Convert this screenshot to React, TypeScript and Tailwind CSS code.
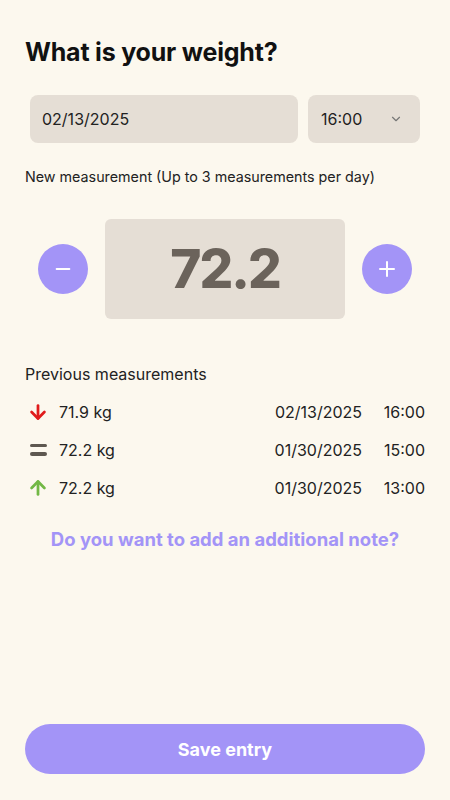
import { ChevronDown, Minus, Plus, ArrowDown, ArrowUp } from 'lucide-react'

const rows = [
  { trend: 'down', value: '71.9 kg', date: '02/13/2025', time: '16:00' },
  { trend: 'same', value: '72.2 kg', date: '01/30/2025', time: '15:00' },
  { trend: 'up', value: '72.2 kg', date: '01/30/2025', time: '13:00' },
]

const TrendIcon = ({ trend }: { trend: string }) => {
  if (trend === 'down') return <ArrowDown className="w-[22px] h-[22px] text-[#e01b1b]" strokeWidth={3} />
  if (trend === 'up') return <ArrowUp className="w-[22px] h-[22px] text-[#72b845]" strokeWidth={3} />
  return (
    <div className="w-[22px] h-[22px] flex flex-col justify-center items-center gap-[5px]">
      <span className="block w-[17px] h-[3.5px] bg-[#5e5850] rounded-sm" />
      <span className="block w-[17px] h-[3.5px] bg-[#5e5850] rounded-sm" />
    </div>
  )
}

export default function App() {
  return (
    <div
      className="w-[450px] h-[800px] bg-[#fcf8ee] flex flex-col px-[25px] pt-[36px] pb-[26px] text-[#1a1a1a]"
      style={{ fontFamily: 'Inter, "Noto Sans", sans-serif' }}
    >
      <h1 className="text-[25px] font-bold leading-[32px] tracking-[-0.2px] text-[#111]">What is your weight?</h1>

      <div className="flex gap-[10px] px-[5px] mt-[27px]">
        <div className="flex-1 h-[48px] rounded-[8px] bg-[#e5ded5] flex items-center px-[12px] text-[16px] text-[#222]">
          02/13/2025
        </div>
        <div className="w-[112px] h-[48px] rounded-[8px] bg-[#e5ded5] flex items-center justify-between pl-[13px] pr-[17px] text-[16px] text-[#222]">
          16:00
          <ChevronDown className="w-[14px] h-[14px] text-[#777]" strokeWidth={2} />
        </div>
      </div>

      <p className="text-[14.3px] mt-[23px] text-[#222]">New measurement (Up to 3 measurements per day)</p>

      <div className="flex items-center justify-center gap-[17px] mt-[32px]">
        <button className="w-[50px] h-[50px] rounded-full bg-[#a394f7] flex items-center justify-center">
          <Minus className="w-[22px] h-[22px] text-white" strokeWidth={2} />
        </button>
        <div className="w-[240px] h-[100px] rounded-[6px] bg-[#e5ded5] flex items-center justify-center">
          <span className="text-[53px] font-extrabold text-[#6b635b] tracking-[-2px]">72.2</span>
        </div>
        <button className="w-[50px] h-[50px] rounded-full bg-[#a394f7] flex items-center justify-center">
          <Plus className="w-[24px] h-[24px] text-white" strokeWidth={2} />
        </button>
      </div>

      <p className="text-[16px] mt-[43px] text-[#222]">Previous measurements</p>

      <div className="flex flex-col mt-[7px]">
        {rows.map((r, i) => (
          <div key={i} className="flex items-center h-[37.7px] text-[16px] text-[#222]">
            <div className="w-[24px] ml-[2px] flex items-center">
              <TrendIcon trend={r.trend} />
            </div>
            <span className="ml-[8px] flex-1">{r.value}</span>
            <span>{r.date}</span>
            <span className="w-[63px] text-right">{r.time}</span>
          </div>
        ))}
      </div>

      <p className="text-center text-[18.5px] font-bold text-[#a394f7] mt-[19px]">Do you want to add an additional note?</p>

      <div className="flex-1" />

      <button className="w-full h-[50px] rounded-full bg-[#a394f7] text-white text-[18px] font-bold">Save entry</button>
    </div>
  )
}
